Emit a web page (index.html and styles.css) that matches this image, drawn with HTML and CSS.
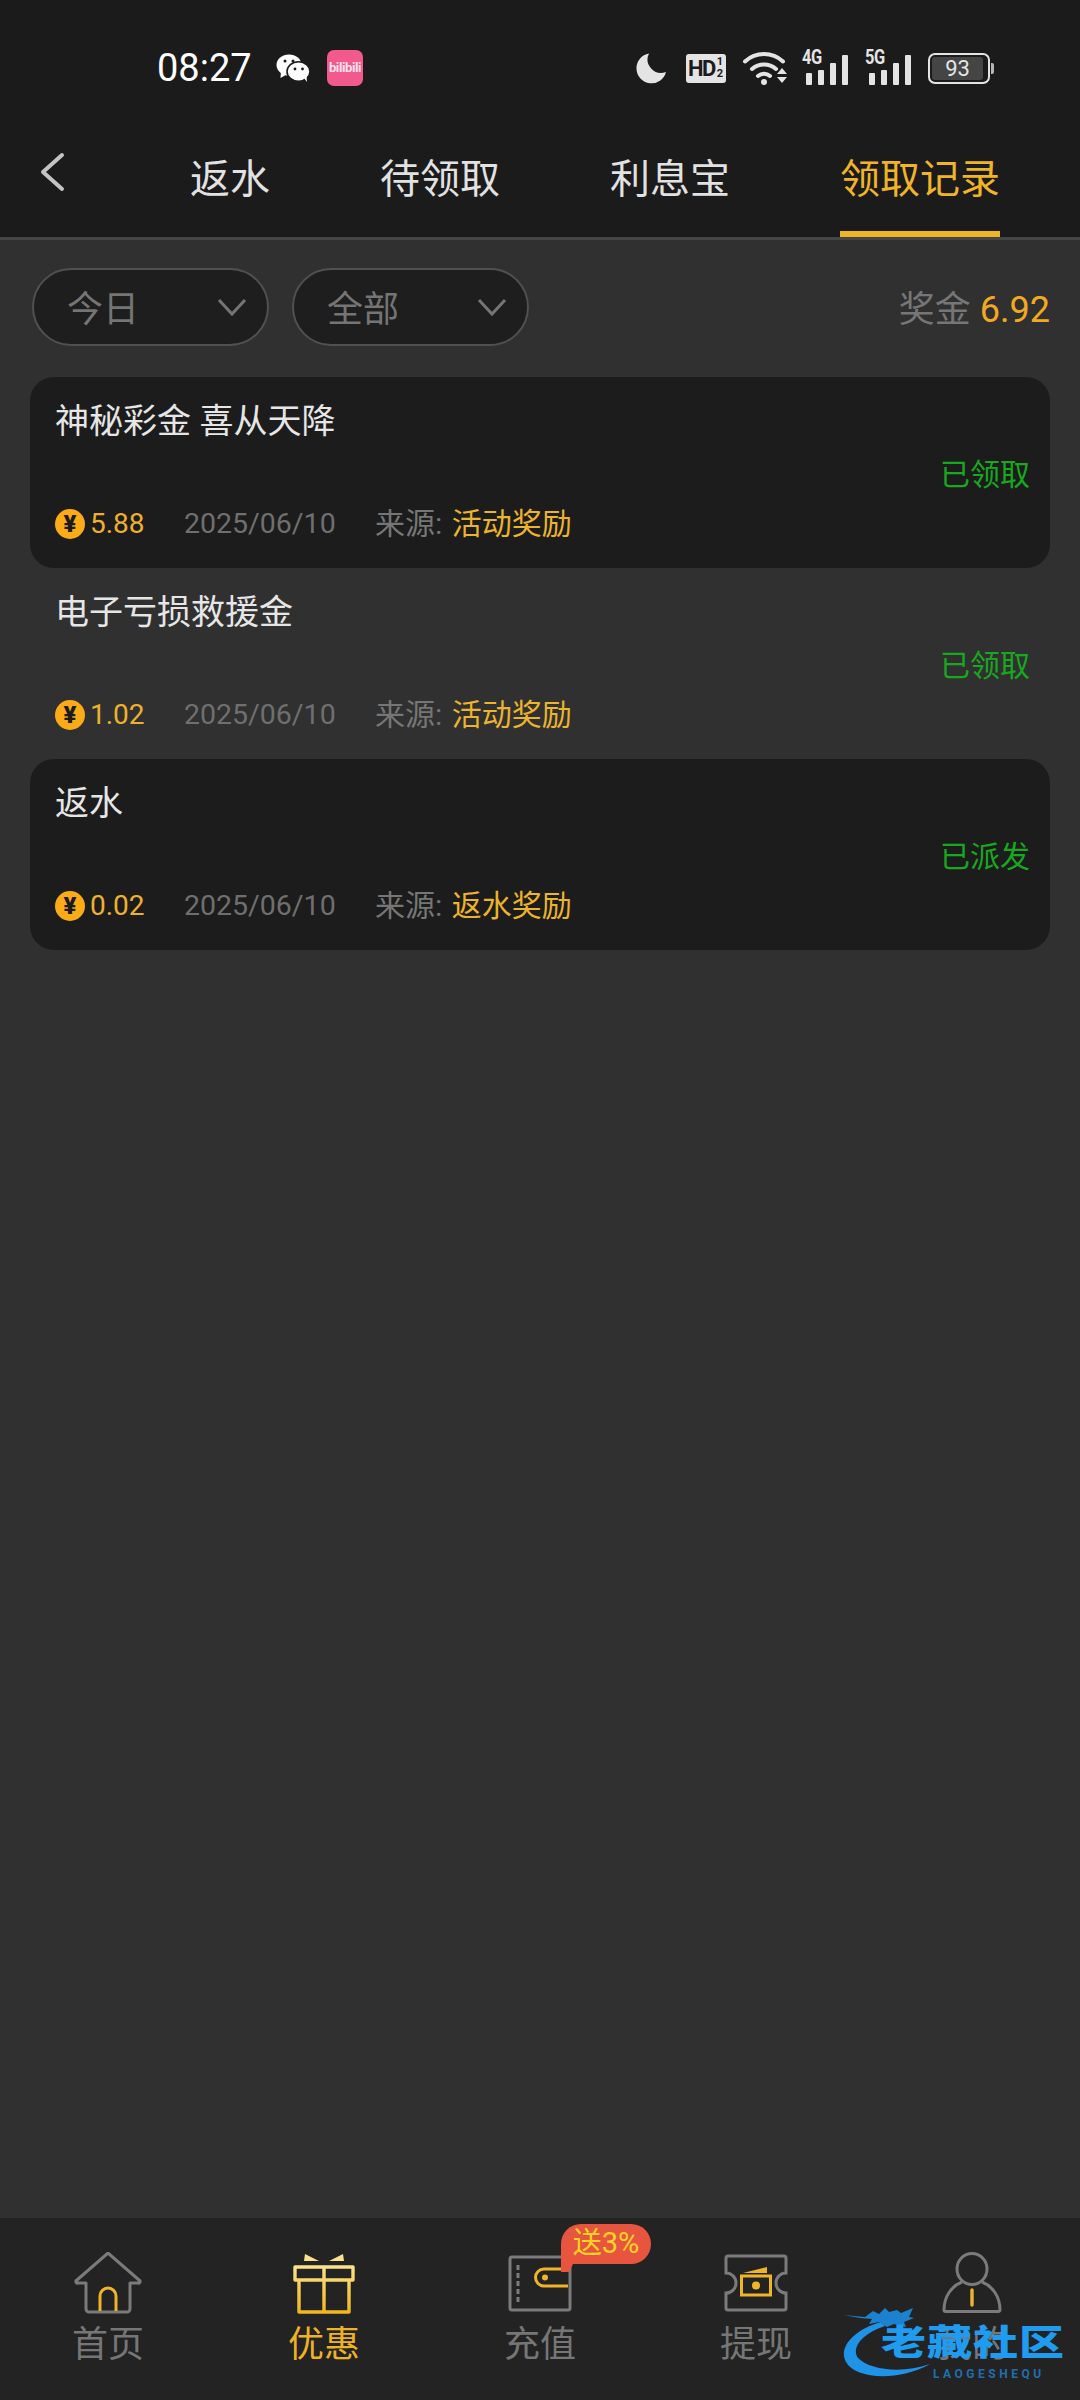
FILE: index.html
```html
<!DOCTYPE html>
<html lang="zh-CN">

<head>
    <meta charset="UTF-8">
    <meta name="viewport" content="width=device-width, initial-scale=1.0">
    <title>领取记录</title>
    <link rel="stylesheet" href="styles.css">
</head>

<body>

    <div class="page">

        <header class="top">
            <div class="status-bar">
                <span class="time">08:27</span>
                <svg class="wechat" viewBox="0 0 34 28" width="34" height="28">
                    <ellipse cx="13" cy="11" rx="12.5" ry="10.5" fill="#fff"/>
                    <path d="M5 17l-.5 7 7-4z" fill="#fff"/>
                    <ellipse cx="22.5" cy="17.5" rx="11.5" ry="9.8" fill="#fff" stroke="#1b1b1b" stroke-width="1.6"/>
                    <path d="M28 24l3 4-.5-6z" fill="#fff"/>
                    <circle cx="9" cy="7" r="1.5" fill="#1b1b1b"/>
                    <circle cx="17" cy="7" r="1.5" fill="#1b1b1b"/>
                    <circle cx="19" cy="15" r="1.4" fill="#1b1b1b"/>
                    <circle cx="26.5" cy="15" r="1.4" fill="#1b1b1b"/>
                </svg>
                <span class="bili">bilibili</span>

                <div class="status-right">
                    <svg viewBox="0 0 32 32" width="32" height="32">
                        <path d="M14 1.500A15 15 0 1 0 31 20 13.500 13.500 0 0 1 14 1.500z" fill="#e4e4e4"/>
                    </svg>
                    <span class="hd">HD<small>1<br>2</small></span>
                    <svg viewBox="0 0 46 36" width="46" height="36">
                        <path d="M3 11.500a28 28 0 0 1 38 0" fill="none" stroke="#e4e4e4" stroke-width="4" stroke-linecap="round"/>
                        <path d="M10 19a18 18 0 0 1 24 0" fill="none" stroke="#e4e4e4" stroke-width="4" stroke-linecap="round"/>
                        <path d="M16 26a9 9 0 0 1 12 0" fill="none" stroke="#e4e4e4" stroke-width="4" stroke-linecap="round"/>
                        <circle cx="22" cy="32" r="3" fill="#e4e4e4"/>
                        <path d="M35 24l5-6 5 6zM35 27h10l-5 6z" fill="#e4e4e4"/>
                    </svg>
                    <div class="signal first"><span class="net">4G</span><i class="b1"></i><i class="b2"></i><i class="b3"></i><i class="b4"></i></div>
                    <div class="signal"><span class="net">5G</span><i class="b1"></i><i class="b2"></i><i class="b3"></i><i class="b4"></i></div>
                    <div class="battery"><div class="battery-body"><span>93</span></div><i></i></div>
                </div>
            </div>

            <nav class="tabs">
                <svg class="back" viewBox="0 0 26 40" width="26" height="40">
                    <path d="M23 3L4 20l19 17" fill="none" stroke="#c4c4c4" stroke-width="4" stroke-linecap="round" stroke-linejoin="round"/>
                </svg>
                <a class="tab tab-1">返水</a>
                <a class="tab tab-2">待领取</a>
                <a class="tab tab-3">利息宝</a>
                <a class="tab active">领取记录</a>
            </nav>
        </header>

        <main class="content">
            <div class="filters">
                <div class="pill">
                    <span>今日</span>
                    <svg viewBox="0 0 30 20" width="30" height="20"><path d="M2 3l13 14L28 3" fill="none" stroke="#757575" stroke-width="3"/></svg>
                </div>
                <div class="pill">
                    <span>全部</span>
                    <svg viewBox="0 0 30 20" width="30" height="20"><path d="M2 3l13 14L28 3" fill="none" stroke="#757575" stroke-width="3"/></svg>
                </div>
                <div class="bonus">奖金 <b>6.92</b></div>
            </div>

            <div class="record dark">
                <h3>神秘彩金 喜从天降</h3>
                <div class="state">已领取</div>
                <div class="meta">
                    <span class="coin">¥</span><span class="amount">5.88</span>
                    <span class="date">2025/06/10</span>
                    <span class="from">来源: <em>活动奖励</em></span>
                </div>
            </div>

            <div class="record">
                <h3>电子亏损救援金</h3>
                <div class="state">已领取</div>
                <div class="meta">
                    <span class="coin">¥</span><span class="amount">1.02</span>
                    <span class="date">2025/06/10</span>
                    <span class="from">来源: <em>活动奖励</em></span>
                </div>
            </div>

            <div class="record dark">
                <h3>返水</h3>
                <div class="state">已派发</div>
                <div class="meta">
                    <span class="coin">¥</span><span class="amount">0.02</span>
                    <span class="date">2025/06/10</span>
                    <span class="from">来源: <em>返水奖励</em></span>
                </div>
            </div>
        </main>

        <footer class="bottom-nav">
            <a class="nav-item">
                <svg viewBox="0 0 68 62" width="68" height="62">
                    <path d="M12 31v26a3 3 0 0 0 3 3h38a3 3 0 0 0 3-3V31h8a1.500 1.500 0 0 0 1-3L34 1 3 28a1.500 1.500 0 0 0 1 3z" fill="none" stroke="#7b7b7b" stroke-width="3" stroke-linejoin="round"/>
                    <path d="M26 59V44a8 8 0 0 1 16 0v15" fill="none" stroke="#f0b429" stroke-width="3"/>
                </svg>
                <span>首页</span>
            </a>
            <a class="nav-item active">
                <svg viewBox="0 0 68 62" width="68" height="62">
                    <defs>
                        <linearGradient id="gift" x1="0" y1="0" x2="0" y2="1">
                            <stop offset="0" stop-color="#fbe28a"/>
                            <stop offset="1" stop-color="#f2b71f"/>
                        </linearGradient>
                    </defs>
                    <path d="M15 2l14 7H14zM53 2L39 9h15z" fill="#fbe28a"/>
                    <path d="M5 15h58v13H5zM9 28v32h50V28M34 15v45" fill="none" stroke="url(#gift)" stroke-width="3.400" stroke-linejoin="round"/>
                </svg>
                <span>优惠</span>
            </a>
            <a class="nav-item">
                <span class="gift-badge">送3%</span>
                <svg viewBox="0 0 68 62" width="68" height="62">
                    <rect x="4" y="5" width="60" height="53" rx="2" fill="none" stroke="#7b7b7b" stroke-width="3"/>
                    <path d="M12 13v38" stroke="#7b7b7b" stroke-width="3" stroke-dasharray="5 3" fill="none"/>
                    <path d="M62 17H38a8.500 8.500 0 0 0 0 17h24" fill="none" stroke="#f0b429" stroke-width="3"/>
                    <circle cx="39" cy="25.500" r="3" fill="#f0b429"/>
                </svg>
                <span>充值</span>
            </a>
            <a class="nav-item">
                <svg viewBox="0 0 68 62" width="68" height="62">
                    <path d="M6 4h56a2 2 0 0 1 2 2v15a10 10 0 0 0 0 20v15a2 2 0 0 1-2 2H6a2 2 0 0 1-2-2V41a10 10 0 0 0 0-20V6a2 2 0 0 1 2-2z" fill="none" stroke="#7b7b7b" stroke-width="3"/>
                    <path d="M21 21l24-6v6z" fill="#f0b429"/>
                    <rect x="19.500" y="24" width="29" height="19" fill="none" stroke="#f0b429" stroke-width="3"/>
                    <circle cx="34" cy="33.500" r="4" fill="#f0b429"/>
                </svg>
                <span>提现</span>
            </a>
            <a class="nav-item">
                <svg viewBox="0 0 68 62" width="68" height="62">
                    <ellipse cx="34" cy="17" rx="15" ry="15.500" fill="none" stroke="#7b7b7b" stroke-width="3"/>
                    <path d="M44 30c10 4 18 14 18 28a1.500 1.500 0 0 1-1.500 1.500h-53A1.500 1.500 0 0 1 6 58c0-14 8-24 18-28" fill="none" stroke="#7b7b7b" stroke-width="3"/>
                    <path d="M34 38v15" stroke="#f0b429" stroke-width="3.400" stroke-linecap="round"/>
                </svg>
                <span>我的</span>
            </a>

            <div class="watermark">
                <svg viewBox="0 0 105 90" width="105" height="90">
                    <path d="M40 20C12 28-3 46 5 60c9 17 52 20 84 2-28 10-60 6-72-6-7-10 3-24 27-32z" fill="#1f93e6"/>
                    <path d="M2 13l22 2 8-6 6 3 6-6 4 4 8-2 4 3 12-5-4 9 5 1-10 4 2 5-12-3-7 3-8-5-10 2 3-5-12-1z" fill="#1c82cf"/>
                </svg>
                <span class="wm-name">老藏社区</span>
                <span class="wm-pinyin">LAOGESHEQU</span>
            </div>
        </footer>

    </div>

</body>
</html>
```

FILE: styles.css
```css
* {
    box-sizing: border-box;
}

body {
    margin: 0;
    background-color: #303030;
    font-family: Roboto, "Noto Sans CJK SC", sans-serif;
}

.page {
    width: 1080px;
    height: 2400px;
    display: flex;
    flex-direction: column;
    overflow: hidden;
}

/* top */
.top {
    background-color: #1b1b1b;
    height: 240px;
    border-bottom: 3px solid #454545;
    flex-shrink: 0;
}

.status-bar {
    height: 136px;
    display: flex;
    align-items: center;
    padding-left: 157px;
    padding-right: 86px;
}

.time {
    color: #fff;
    font-size: 38px;
    width: 119px;
}

.wechat {
    margin-right: 17px;
}

.bili {
    width: 36px;
    height: 36px;
    background-color: #f2598c;
    border-radius: 7px;
    color: #fde4ec;
    font-size: 13px;
    font-weight: 700;
    letter-spacing: -0.4px;
    text-align: center;
    line-height: 35px;
    overflow: hidden;
}

.status-right {
    margin-left: auto;
    display: flex;
    align-items: center;
    gap: 17px;
}

.hd {
    width: 40px;
    height: 29px;
    background-color: #e4e4e4;
    border-radius: 3px;
    color: #1b1b1b;
    font-size: 22px;
    font-weight: 700;
    line-height: 29px;
    letter-spacing: -1.5px;
    padding-left: 2px;
    display: flex;
    margin-left: 2px;
    margin-right: -1px;
}

.hd small {
    font-size: 11px;
    line-height: 12px;
    letter-spacing: 0;
    padding: 2px 0 0 2px;
}

.signal {
    width: 46px;
    height: 34px;
    display: flex;
    align-items: flex-end;
    justify-content: flex-end;
    gap: 5.5px;
    position: relative;
}

.signal.first {
    margin-left: -3px;
}

.signal i {
    width: 6.5px;
    background-color: #e4e4e4;
    border-radius: 1px;
}

.signal .b1 { height: 12px; }
.signal .b2 { height: 15px; }
.signal .b3 { height: 22px; }
.signal .b4 { height: 30px; }

.net {
    position: absolute;
    left: 0;
    top: -4px;
    color: #e4e4e4;
    font-size: 20px;
    font-weight: 700;
    line-height: 20px;
    letter-spacing: -0.5px;
    transform: scaleX(0.82);
    transform-origin: left;
}

.battery {
    display: flex;
    align-items: center;
    gap: 1px;
}

.battery-body {
    width: 62px;
    height: 31px;
    border: 2px solid #e4e4e4;
    border-radius: 7px;
    padding: 2px;
}

.battery-body span {
    display: block;
    width: 51px;
    height: 23px;
    background-color: #454545;
    border-radius: 3px;
    color: #e4e4e4;
    font-size: 22px;
    line-height: 23px;
    text-align: center;
}

.battery i {
    width: 3px;
    height: 11px;
    background-color: #b5b5b5;
    border-radius: 0 2px 2px 0;
}

/* tabs */
.tabs {
    height: 101px;
    display: flex;
    padding-left: 39px;
    padding-right: 80px;
}

.back {
    margin-top: 16px;
}

.tab {
    color: #e2e2e2;
    font-size: 40px;
    line-height: 58px;
    padding-top: 15px;
    height: 101px;
}

.tab-1 {
    margin-left: 125px;
}

.tab-2 {
    margin-left: 110px;
}

.tab-3 {
    margin-left: 110px;
}

.tab.active {
    margin-left: auto;
    color: #f0b429;
    border-bottom: 6px solid #f0b429;
}

/* content */
.content {
    flex: 1;
    padding: 28px 30px 0;
}

.filters {
    display: flex;
    align-items: center;
    gap: 23px;
    height: 78px;
    margin-bottom: 31px;
    padding-left: 2px;
}

.pill {
    width: 237px;
    height: 78px;
    background-color: #1e1e1e;
    border: 2px solid #505050;
    border-radius: 39px;
    display: flex;
    align-items: center;
    justify-content: space-between;
    padding: 0 20px 0 33px;
    color: #757575;
    font-size: 36px;
}

.pill span {
    margin-top: -3px;
}

.bonus {
    margin-left: auto;
    margin-top: -3px;
    color: #767676;
    font-size: 36px;
}

.bonus b {
    color: #f2a922;
    font-weight: 400;
}

.record {
    height: 191px;
    padding: 18px 20px 0 25px;
    border-radius: 24px;
}

.record.dark {
    background-color: #1c1c1c;
}

.record h3 {
    margin: 0;
    color: #e6e6e6;
    font-size: 34px;
    font-weight: 400;
    line-height: 52px;
}

.state {
    text-align: right;
    color: #18a81f;
    font-size: 30px;
    line-height: 44px;
    margin-top: 6px;
}

.meta {
    display: flex;
    align-items: center;
    font-size: 28px;
    line-height: 48px;
    margin-top: 3px;
}

.coin {
    width: 30px;
    height: 30px;
    background-color: #fbab18;
    border-radius: 50%;
    color: #1c1c1c;
    font-size: 24px;
    font-weight: 900;
    line-height: 30px;
    text-align: center;
}

.amount {
    color: #eeb12e;
    margin-left: 5px;
    width: 94px;
}

.date {
    color: #6f6f6f;
    font-size: 28.5px;
    width: 191px;
}

.from {
    color: #767676;
    font-size: 30px;
}

.from em {
    color: #ecb42c;
    font-style: normal;
    margin-left: 2px;
}

/* bottom */
.bottom-nav {
    height: 182px;
    flex-shrink: 0;
    background-color: #232323;
    display: flex;
    position: relative;
}

.nav-item {
    flex: 1;
    display: flex;
    flex-direction: column;
    align-items: center;
    padding-top: 34px;
    color: #767676;
    font-size: 36px;
    position: relative;
}

.nav-item span {
    line-height: 52px;
    margin-top: 5px;
}

.nav-item.active {
    color: #eeb226;
}

.nav-item .gift-badge {
    position: absolute;
    left: 129px;
    top: 6px;
    width: 90px;
    height: 40px;
    margin: 0;
    background-color: #e8553f;
    border-radius: 20px 20px 20px 0;
    color: #ffd426;
    font-size: 29px;
    line-height: 38px;
    text-align: center;
    white-space: nowrap;
}

.nav-item .gift-badge::after {
    content: "";
    position: absolute;
    left: 0;
    top: 36px;
    border-left: 8px solid #e8553f;
    border-right: 6px solid transparent;
    border-top: 12px solid #e8553f;
}

.watermark {
    position: absolute;
    left: 841px;
    top: 84px;
    width: 235px;
    height: 92px;
}

.wm-name {
    position: absolute;
    left: 40px;
    top: 13px;
    color: #1f9bf0;
    font-size: 45px;
    font-weight: 900;
    line-height: 56px;
    white-space: nowrap;
    letter-spacing: 1px;
    transform: scaleY(0.78);
}

.wm-pinyin {
    position: absolute;
    left: 92px;
    top: 65px;
    color: #1f6fae;
    font-size: 12px;
    line-height: 14px;
    letter-spacing: 3.5px;
    font-weight: 700;
}
```
